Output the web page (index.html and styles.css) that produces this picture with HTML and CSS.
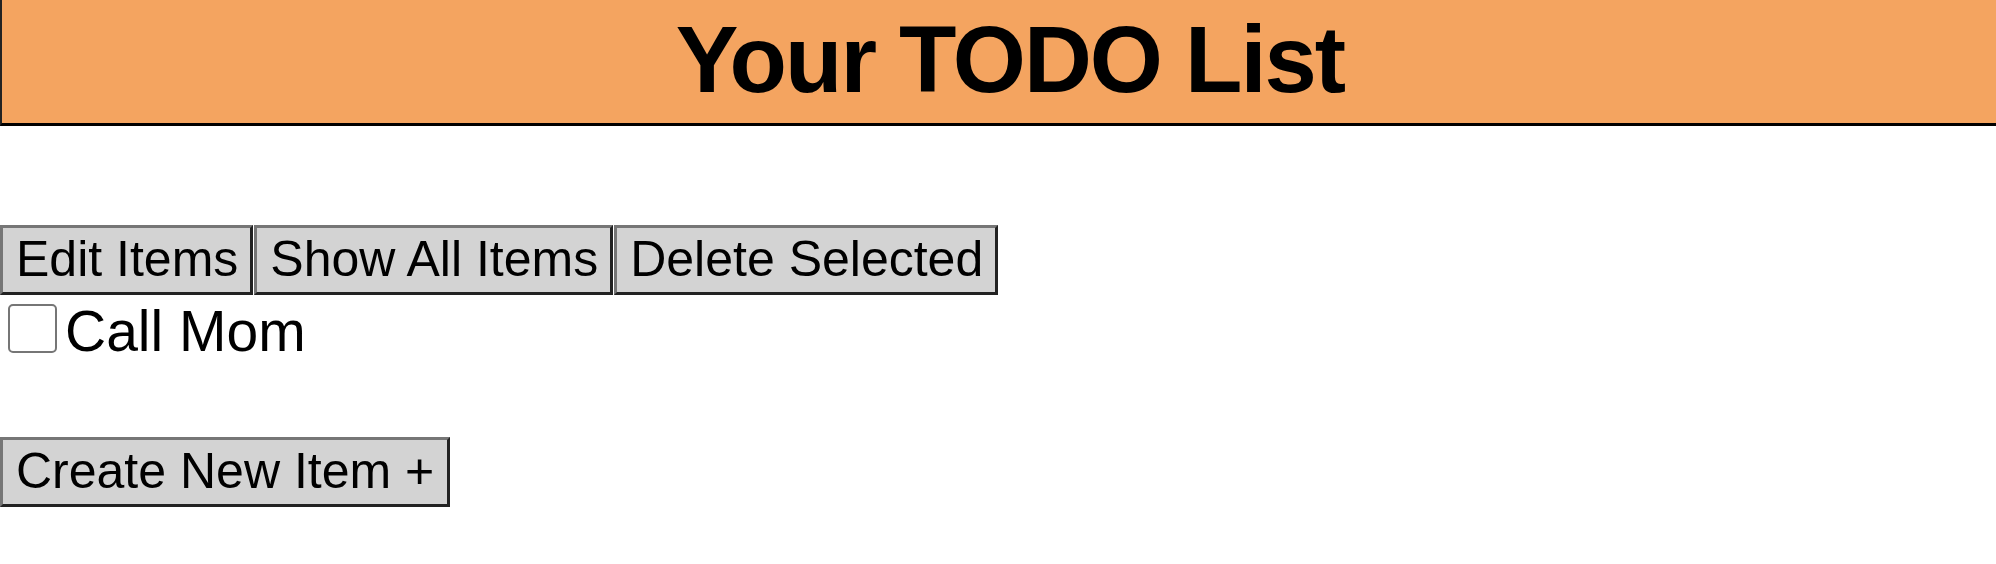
FILE: index.html
```html
<!DOCTYPE html>
<html>
<head>
<meta charset="utf-8">
<link rel="stylesheet" href="styles.css">
</head>
<body>
<header class="top">
  <h1 class="title">Your TODO List</h1>
</header>
<main class="content">
  <div class="toolbar">
    <button class="btn">Edit Items</button>
    <button class="btn">Show All Items</button>
    <button class="btn">Delete Selected</button>
  </div>
  <ul class="items">
    <li class="item"><input type="checkbox" class="check"><span class="label">Call Mom</span></li>
  </ul>
  <div class="actions">
    <button class="btn">Create New Item +</button>
  </div>
</main>
</body>
</html>
```
FILE: styles.css
```css
html, body {
  margin: 0;
  padding: 0;
  background: #ffffff;
  font-family: "Liberation Sans", Arial, sans-serif;
  overflow: hidden;
}
.top {
  background: #f4a460;
  border-left: 2px solid #222;
  border-bottom: 3px solid #000;
  padding: 6px 0 9px 22px;
}
.title {
  margin: 0;
  text-align: center;
  font-family: "Liberation Sans", Arial, sans-serif;
  font-weight: 700;
  font-size: 94px;
  line-height: 108px;
  letter-spacing: -2px;
  color: #000;
}
.content {
  display: flex;
  flex-direction: column;
  align-items: flex-start;
  padding-top: 99px;
}
.toolbar {
  display: flex;
  gap: 1px;
}
.btn {
  font-family: "Liberation Sans", Arial, sans-serif;
  font-size: 50px;
  line-height: 57px;
  color: #000;
  background: #d3d3d3;
  border-style: solid;
  border-width: 3px;
  border-color: #767676 #222 #222 #767676;
  padding: 3px 12px 4px 13px;
  margin: 0;
  border-radius: 0;
}
.actions .btn {
  padding-right: 13px;
}
.items {
  list-style: none;
  margin: 0;
  padding: 0;
}
.item {
  display: flex;
  align-items: center;
  height: 66px;
}
.check {
  appearance: none;
  -webkit-appearance: none;
  box-sizing: border-box;
  width: 49px;
  height: 49px;
  margin: 0 8px 0 8px;
  background: #fff;
  border: 2px solid #767676;
  border-radius: 5px;
}
.label {
  font-size: 57px;
  line-height: 64px;
  padding-top: 5px;
}
.actions {
  margin-top: 76px;
}
```
